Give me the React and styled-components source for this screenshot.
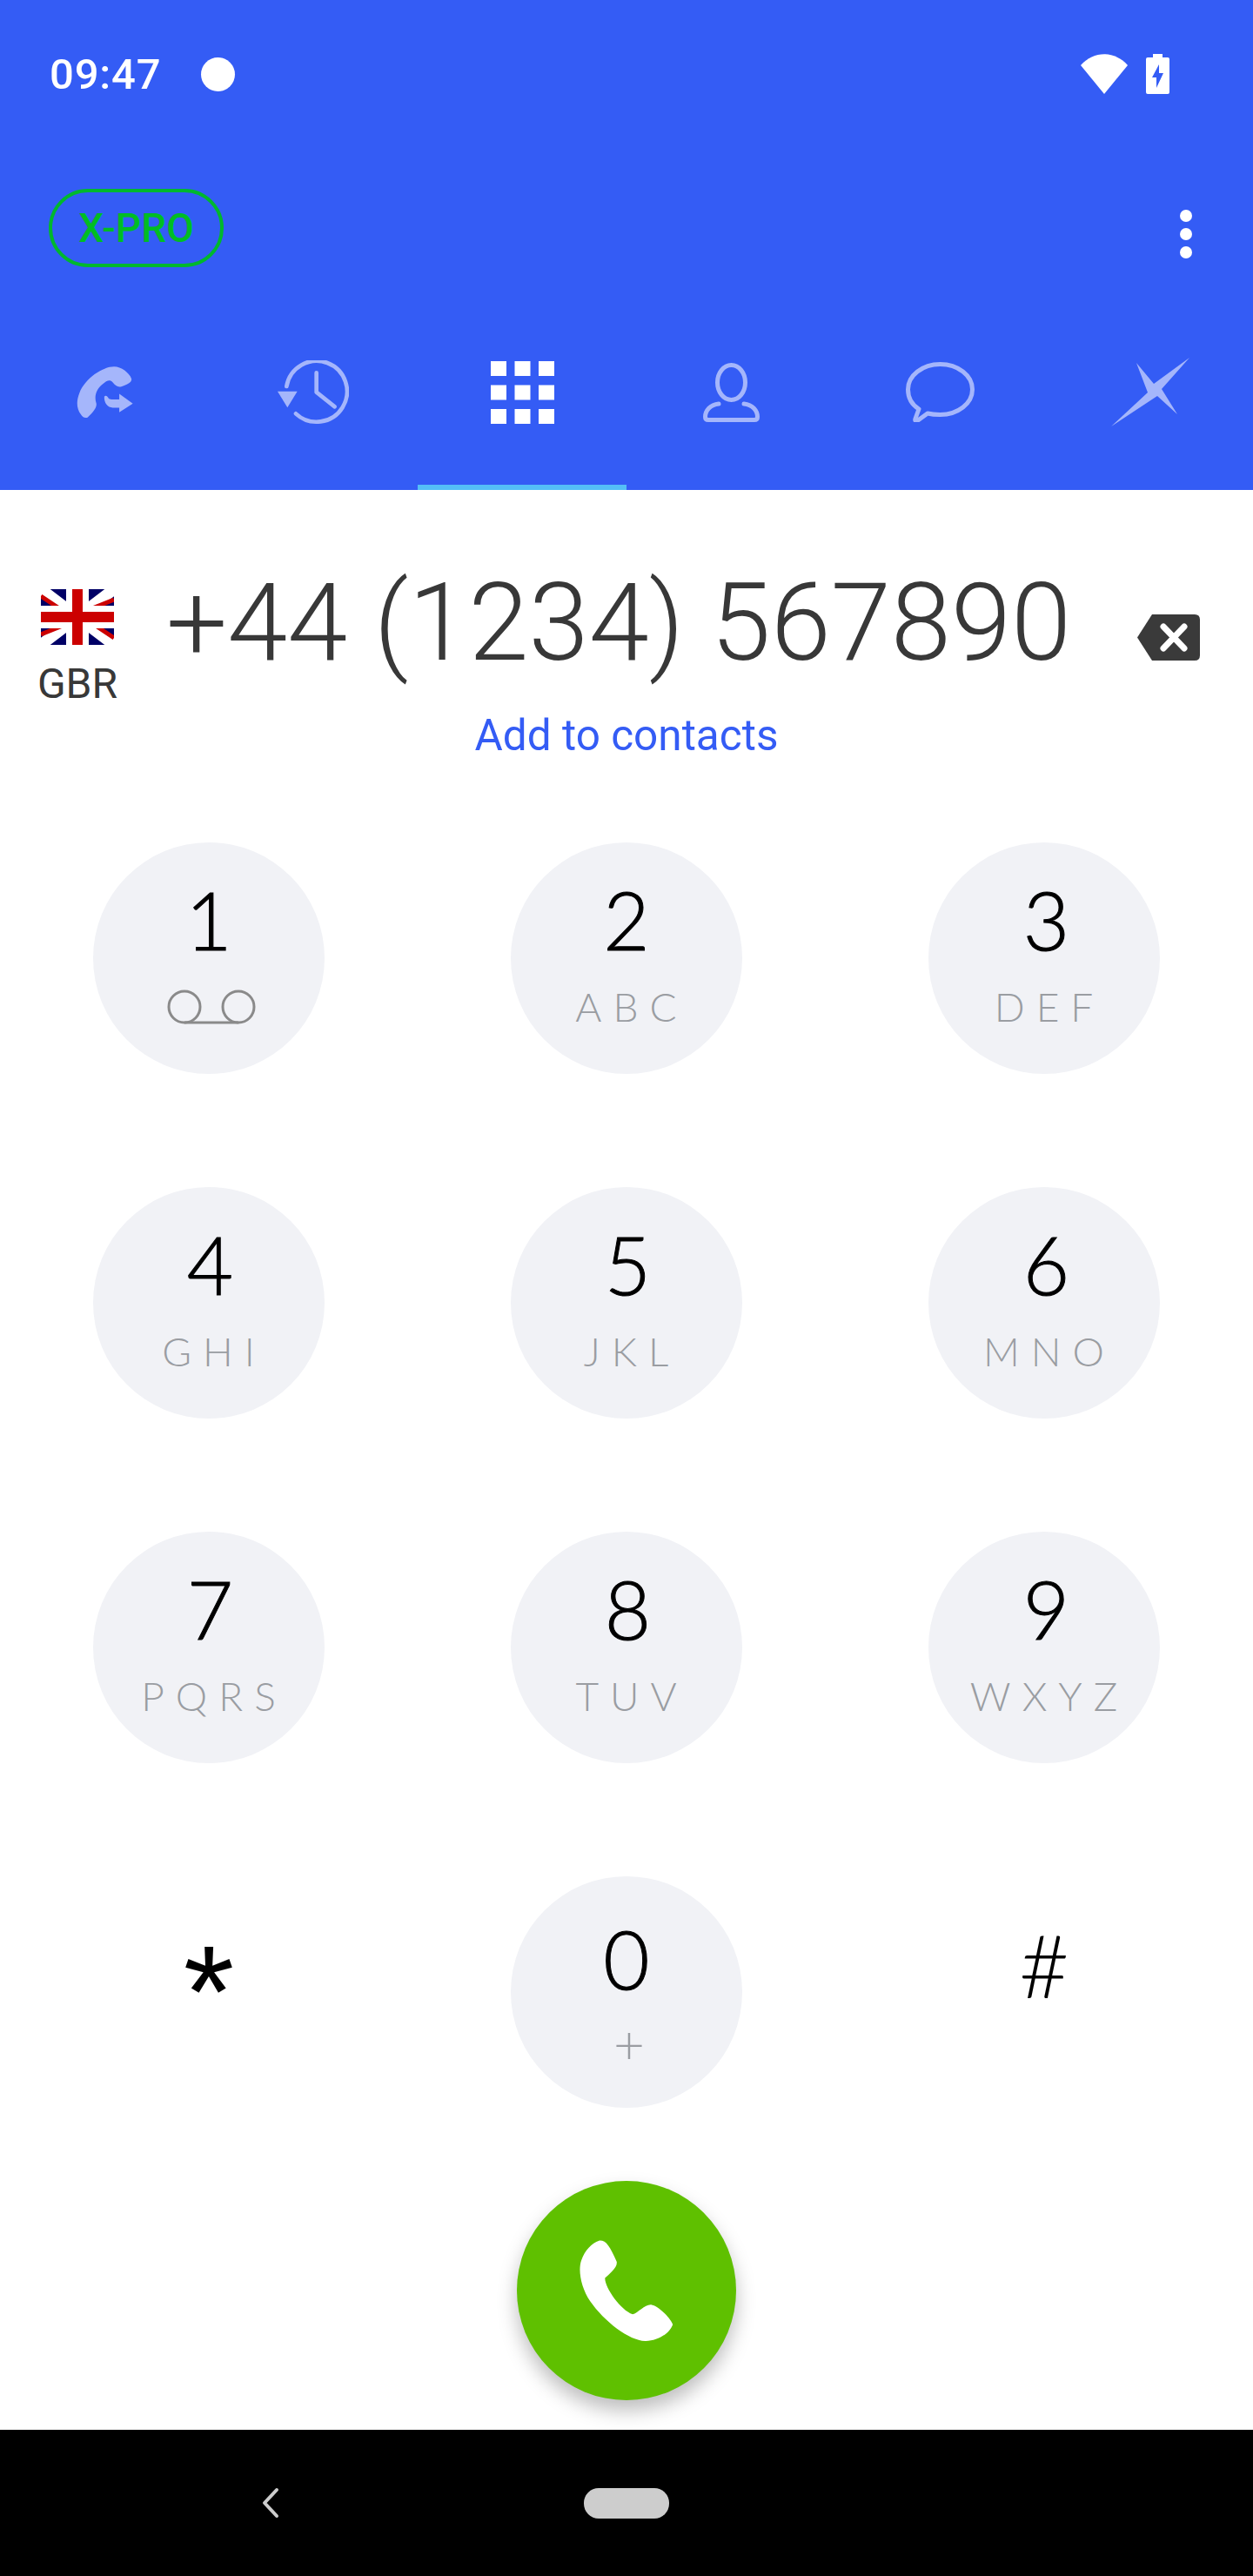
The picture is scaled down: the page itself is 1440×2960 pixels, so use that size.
import styled, { createGlobalStyle } from "styled-components";

const blue = "#345cf5";
const tabIcon = "#a5b6fb";

const GlobalStyle = createGlobalStyle`
  html, body {
    margin: 0;
    padding: 0;
    background: #fff;
  }
  body {
    font-family: Roboto, "Liberation Sans", sans-serif;
  }
`;

const Screen = styled.div`
  width: 1440px;
  height: 2960px;
  display: flex;
  flex-direction: column;
  overflow: hidden;
  background: #fff;
`;

const Header = styled.header`
  height: 563px;
  flex: none;
  background: ${blue};
  display: flex;
  flex-direction: column;
`;

const StatusBar = styled.div`
  height: 170px;
  flex: none;
  box-sizing: border-box;
  padding: 0 96px 0 57px;
  display: flex;
  align-items: center;
  color: #fff;
`;

const Time = styled.span`
  font-size: 49px;
  font-weight: 500;
  letter-spacing: 0.8px;
`;

const NotifDot = styled.span`
  width: 39px;
  height: 39px;
  margin-left: 46px;
  border-radius: 50%;
  background: #fff;
`;

const StatusIcons = styled.div`
  margin-left: auto;
  display: flex;
  align-items: center;
  gap: 21px;
`;

const Toolbar = styled.div`
  height: 210px;
  flex: none;
  box-sizing: border-box;
  padding: 47px 70px 0 56px;
  display: flex;
  justify-content: space-between;
  align-items: flex-start;
`;

const ProBadge = styled.div`
  width: 201px;
  height: 90px;
  box-sizing: border-box;
  border: 4px solid #00b82e;
  border-radius: 45px;
  display: flex;
  align-items: center;
  justify-content: center;
  color: #00bd24;
  font-size: 46px;
  font-weight: 500;
`;

const MenuDots = styled.div`
  margin-top: 24px;
  display: flex;
  flex-direction: column;
  gap: 7px;
`;

const MenuDot = styled.span`
  width: 14px;
  height: 14px;
  border-radius: 50%;
  background: #fff;
`;

const Tabs = styled.nav`
  display: grid;
  grid-template-columns: repeat(6, 1fr);
  flex: 1;
`;

const Tab = styled.div`
  box-sizing: border-box;
  padding-bottom: 36px;
  padding-left: ${(props) => props.$shift || 0}px;
  border-bottom: 6px solid ${(props) => (props.$active ? "#54bff7" : "transparent")};
  display: flex;
  align-items: center;
  justify-content: center;
`;

const DialDisplay = styled.section`
  height: 405px;
  flex: none;
  box-sizing: border-box;
  padding-top: 79px;
  display: flex;
  flex-direction: column;
`;

const NumberRow = styled.div`
  height: 173px;
  box-sizing: border-box;
  padding: 0 61px 0 43px;
  display: flex;
  align-items: flex-start;
  justify-content: space-between;
`;

const Country = styled.div`
  margin-top: 35px;
  width: 92px;
  display: flex;
  flex-direction: column;
  align-items: center;
  color: #383838;
  font-size: 48px;
  line-height: 52px;
  gap: 19px;
`;

const PhoneNumber = styled.div`
  margin: 3px 20px 0 0;
  font-size: 124.5px;
  font-weight: 300;
  line-height: 140px;
  color: #383838;
  white-space: nowrap;
`;

const DeleteIcon = styled.svg`
  margin-top: 64px;
`;

const AddLink = styled.a`
  align-self: center;
  font-size: 49.5px;
  line-height: 60px;
  color: ${blue};
`;

const Keypad = styled.section`
  display: grid;
  grid-template-columns: repeat(3, 1fr);
  grid-auto-rows: 266px;
  row-gap: 130px;
  justify-items: center;
`;

const Key = styled.div`
  width: 266px;
  height: 266px;
  box-sizing: border-box;
  padding-top: ${(props) => props.$pad || 41}px;
  border-radius: 50%;
  background: ${(props) => (props.$plain ? "transparent" : "#f1f2f6")};
  display: flex;
  flex-direction: column;
  align-items: center;
  font-family: Lato, "Liberation Sans", sans-serif;
`;

const Digit = styled.span`
  margin-left: ${(props) => props.$nudge || 0}px;
  font-size: 92px;
  line-height: 96px;
  font-weight: 300;
  -webkit-text-stroke: 1px #000;
  color: #000;
`;

const Letters = styled.span`
  margin: 29px 0 0 12px;
  font-size: 46px;
  line-height: 46px;
  font-weight: 300;
  letter-spacing: 13px;
  color: #9a9da2;
`;

const PlusSign = styled.span`
  margin-top: 25px;
  margin-left: 6px;
  font-size: 62px;
  line-height: 46px;
  font-weight: 300;
  color: #9a9da2;
`;

const Voicemail = styled.svg`
  margin: 32px 0 0 5px;
`;

const Symbol = styled.span`
  margin-top: ${(props) => props.$top}px;
  font-family: ${(props) => props.$font};
  font-size: ${(props) => props.$size}px;
  line-height: 96px;
  font-weight: ${(props) => props.$weight};
  color: #000;
`;

const CallRow = styled.div`
  margin-top: 84px;
  display: flex;
  justify-content: center;
`;

const CallButton = styled.button`
  width: 252px;
  height: 252px;
  padding: 0;
  border: none;
  border-radius: 50%;
  background: #5fc000;
  box-shadow: 0 12px 22px rgba(0, 0, 0, 0.26);
  display: flex;
  align-items: center;
  justify-content: center;
`;

const NavBar = styled.div`
  margin-top: auto;
  height: 168px;
  flex: none;
  background: #000;
  position: relative;
  display: flex;
  align-items: center;
  justify-content: center;
`;

const HomePill = styled.span`
  width: 98px;
  height: 35px;
  border-radius: 17px;
  background: #cdcdcd;
`;

const BackIcon = styled.svg`
  position: absolute;
  left: 298px;
  top: 64px;
`;

const WifiIcon = () => (
  <svg width="54" height="46" viewBox="0 0 54 46">
    <path d="M27 46 L0 13 C15 -4 39 -4 54 13 Z" fill="#fff" />
  </svg>
);

const BatteryIcon = () => (
  <svg width="27" height="46" viewBox="0 0 27 46">
    <path
      d="M8 0 H19 V4 H25 Q27 4 27 6 V44 Q27 46 25 46 H2 Q0 46 0 44 V6 Q0 4 2 4 H8 Z"
      fill="#fff"
    />
    <path d="M15 12 L7 27 H12 L12 39 L20 22 H15 Z" fill={blue} />
  </svg>
);

const CallsIcon = () => (
  <svg width="65" height="61" viewBox="80 120 196 184" fill={tabIcon}>
    <path d="M210 124 C235 124 262 145 270 165 C273 175 262 185 235 193 C222 196 215 190 205 178 C195 168 185 172 170 185 C150 200 140 225 148 250 C152 262 140 280 118 300 C108 304 100 298 95 290 C80 270 78 245 90 215 C110 165 170 124 210 124 Z" />
    <path d="M228 218 L275 252 L228 282 L228 266 L205 266 C188 266 175 250 176 228 C180 222 186 224 190 232 C194 238 205 238 228 238 Z" />
  </svg>
);

const HistoryIcon = () => (
  <svg width="82" height="74" viewBox="775 100 246 222" fill="none">
    <path
      d="M838 284 A105 105 0 1 0 806 190"
      stroke={tabIcon}
      strokeWidth="14"
      strokeLinecap="round"
    />
    <path d="M775 207 H843 L809 263 Z" fill={tabIcon} />
    <path
      d="M909 143 V210 L972 260"
      stroke={tabIcon}
      strokeWidth="14"
      strokeLinecap="round"
      strokeLinejoin="round"
    />
  </svg>
);

const GridIcon = () => (
  <svg width="73" height="72" viewBox="0 0 73 72" fill="#fff">
    {[0, 27.5, 55].map((x) =>
      [0, 27.5, 55].map((y) => <rect key={`${x}-${y}`} x={x} y={y} width="18" height="17" />)
    )}
  </svg>
);

const PersonIcon = () => (
  <svg width="65" height="68" viewBox="807 416 65 68" fill="none" stroke={tabIcon} strokeWidth="5">
    <ellipse cx="839.5" cy="438.5" rx="16" ry="20" />
    <path
      d="M825 463 C815 464 809.5 471 809.5 478 Q809.5 481.5 813 481.5 L866 481.5 Q869.5 481.5 869.5 478 C869.5 471 864 464 854 463"
      strokeLinecap="round"
    />
  </svg>
);

const ChatIcon = () => (
  <svg width="79" height="69" viewBox="1039 417 79 69" fill="none">
    <path
      d="M1064 476 C1068 477 1073 477.5 1078.5 477.5 C1099 477.5 1115.5 464.5 1115.5 448.5 C1115.5 432.5 1099 419.5 1078.5 419.5 C1058 419.5 1041.5 432.5 1041.5 448.5 C1041.5 458 1046 466 1054 471 L1050 482 C1049 485 1051 485 1053 484 Z"
      stroke={tabIcon}
      strokeWidth="5"
      strokeLinejoin="round"
    />
  </svg>
);

const XIcon = () => (
  <svg width="91" height="79" viewBox="1277 412 91 79" fill={tabIcon}>
    <path d="M1367 412 L1335 448 L1353 477 L1330 456 L1277 491 L1319 452 L1306 418 L1326 442 Z" />
  </svg>
);

const Flag = () => (
  <svg width="84" height="64" viewBox="0 0 84 64">
    <rect width="84" height="64" fill="#000066" />
    <path d="M0 0 L84 64 M84 0 L0 64" stroke="#fff" strokeWidth="13" />
    <path d="M0 8 L30 28 M84 56 L54 36 M84 12 L54 24 M0 52 L30 40" stroke="#cc0000" strokeWidth="5" />
    <rect x="29" width="26" height="64" fill="#fff" />
    <rect y="19" width="84" height="26" fill="#fff" />
    <rect x="36" width="12" height="64" fill="#cc0000" />
    <rect y="26" width="84" height="12" fill="#cc0000" />
  </svg>
);

const keys = [
  { digit: "1", voicemail: true },
  { digit: "2", letters: "ABC" },
  { digit: "3", letters: "DEF", nudge: 5 },
  { digit: "4", letters: "GHI", nudge: 3 },
  { digit: "5", letters: "JKL", nudge: 3 },
  { digit: "6", letters: "MNO", nudge: 5 },
  { digit: "7", letters: "PQRS", nudge: 3 },
  { digit: "8", letters: "TUV", nudge: 3 },
  { digit: "9", letters: "WXYZ", nudge: 5 },
  { symbol: "*", size: 150, top: 44, weight: 400, font: '"Liberation Sans", sans-serif' },
  { digit: "0", plus: true, pad: 47 },
  { symbol: "#", size: 100, top: 12, weight: 300, font: "Lato, sans-serif" },
];

const App = () => (
  <Screen>
    <GlobalStyle />
    <Header>
      <StatusBar>
        <Time>09:47</Time>
        <NotifDot />
        <StatusIcons>
          <WifiIcon />
          <BatteryIcon />
        </StatusIcons>
      </StatusBar>
      <Toolbar>
        <ProBadge>X-PRO</ProBadge>
        <MenuDots>
          <MenuDot />
          <MenuDot />
          <MenuDot />
        </MenuDots>
      </Toolbar>
      <Tabs>
        <Tab><CallsIcon /></Tab>
        <Tab><HistoryIcon /></Tab>
        <Tab $active><GridIcon /></Tab>
        <Tab><PersonIcon /></Tab>
        <Tab><ChatIcon /></Tab>
        <Tab $shift={5}><XIcon /></Tab>
      </Tabs>
    </Header>

    <DialDisplay>
      <NumberRow>
        <Country>
          <Flag />
          GBR
        </Country>
        <PhoneNumber>+44 (1234) 567890</PhoneNumber>
        <DeleteIcon width="72" height="53" viewBox="0 0 72 53">
          <path
            d="M17 0 H66 Q72 0 72 6 V47 Q72 53 66 53 H17 L0 26.5 Z"
            fill="#3a3a3a"
          />
          <path
            d="M30 14 L54 39 M54 14 L30 39"
            stroke="#fff"
            strokeWidth="7"
            strokeLinecap="round"
          />
        </DeleteIcon>
      </NumberRow>
      <AddLink>Add to contacts</AddLink>
    </DialDisplay>

    <Keypad>
      {keys.map((key) =>
        key.symbol ? (
          <Key key={key.symbol} $plain>
            <Symbol $size={key.size} $top={key.top} $weight={key.weight} $font={key.font}>
              {key.symbol}
            </Symbol>
          </Key>
        ) : (
          <Key key={key.digit} $pad={key.pad}>
            <Digit $nudge={key.nudge}>{key.digit}</Digit>
            {key.voicemail && (
              <Voicemail width="102" height="40" viewBox="0 0 102 40" fill="none" stroke="#8a8a8a" strokeWidth="3">
                <circle cx="20" cy="20" r="18" />
                <circle cx="82" cy="20" r="18" />
                <path d="M20 38 H82" />
              </Voicemail>
            )}
            {key.letters && <Letters>{key.letters}</Letters>}
            {key.plus && <PlusSign>+</PlusSign>}
          </Key>
        )
      )}
    </Keypad>

    <CallRow>
      <CallButton>
        <svg width="108" height="117" viewBox="650 280 265 350" preserveAspectRatio="none" fill="#fff">
          <path d="M705 282 C725 280 735 300 755 355 C757 375 735 395 722 410 C720 440 765 520 800 535 C815 530 835 500 852 502 C870 505 905 545 913 570 C905 600 870 628 835 627 C790 625 720 560 680 490 C655 445 645 385 655 350 C665 315 685 290 705 282 Z" />
        </svg>
      </CallButton>
    </CallRow>

    <NavBar>
      <BackIcon width="26" height="40" viewBox="0 0 26 40" fill="none">
        <path d="M20 5 L6 20 L20 35" stroke="#cdcdcd" strokeWidth="4" strokeLinecap="round" strokeLinejoin="round" />
      </BackIcon>
      <HomePill />
    </NavBar>
  </Screen>
);

export default App;
